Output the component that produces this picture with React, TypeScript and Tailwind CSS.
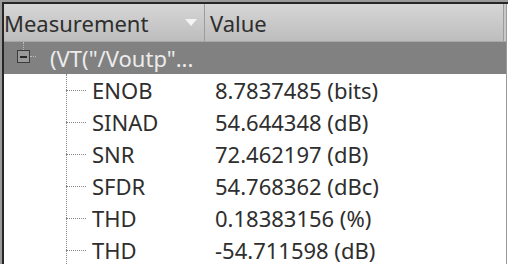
const rows = [
  { name: 'ENOB', value: '8.7837485 (bits)' },
  { name: 'SINAD', value: '54.644348 (dB)' },
  { name: 'SNR', value: '72.462197 (dB)' },
  { name: 'SFDR', value: '54.768362 (dBc)' },
  { name: 'THD', value: '0.18383156 (%)' },
  { name: 'THD', value: '-54.711598 (dB)' },
]

export default function App() {
  return (
    <div
      className="h-[264px] w-[508px] overflow-hidden bg-[#9a9a9a] pl-[2px] pt-[2px] text-[22px] text-[#2e2e2e]"
      style={{ fontFamily: '"Noto Sans", "Open Sans", sans-serif' }}
    >
      <div className="h-full border-l-2 border-t-2 border-[#262626] bg-white pr-[1px]">
        <div className="h-full border-r border-[#9a9a9a]">
          {/* header */}
          <div className="flex h-[38px] border-b border-[#a8a8a8] bg-gradient-to-b from-[#d6d6d6] to-[#bdbdbd]">
            <div className="flex w-[201px] items-center border-r border-[#9c9c9c]">
              <span className="flex-1 whitespace-nowrap leading-none">Measurement</span>
              <svg width="12" height="7" viewBox="0 0 12 7" className="mr-[7px] shrink-0">
                <polygon points="0,0 12,0 6,7" fill="#f4f4f4" />
              </svg>
            </div>
            <div className="flex flex-1 items-center pl-[5px] leading-none">Value</div>
            <div className="w-[3px] border-l border-[#9c9c9c] bg-[#c9c9c9]" />
          </div>

          {/* group row */}
          <div className="flex h-[32px] items-center bg-[#818181] text-[#ececec]">
            <div className="relative ml-[13px] h-full w-[33px]">
              <div className="absolute left-[6px] top-0 h-[8px] border-l border-dotted border-[#bbbbbb]" />
              <div className="absolute left-0 top-[8px] flex h-[13px] w-[13px] items-center justify-center border border-[#3c3c3c] bg-[#9a9a9a]">
                <div className="h-[2px] w-[7px] bg-[#2a2a2a]" />
              </div>
              <div className="absolute left-[13px] top-[14px] w-[6px] border-t border-dotted border-[#bbbbbb]" />
            </div>
            <span className="whitespace-nowrap leading-none">(VT("/Voutp"...</span>
          </div>

          {/* children */}
          <div className="relative">
            <div className="absolute left-[62px] top-0 h-full border-l border-dotted border-[#888]" />
            {rows.map((r, i) => (
              <div key={i} className="flex h-[32px] items-center">
                <div className="flex w-[201px] items-center">
                  <div className="ml-[62px] mr-[6px] w-[20px] border-t border-dotted border-[#888]" />
                  <span className="leading-none">{r.name}</span>
                </div>
                <span className="whitespace-nowrap pl-[10px] leading-none">{r.value}</span>
              </div>
            ))}
          </div>
        </div>
      </div>
    </div>
  )
}
